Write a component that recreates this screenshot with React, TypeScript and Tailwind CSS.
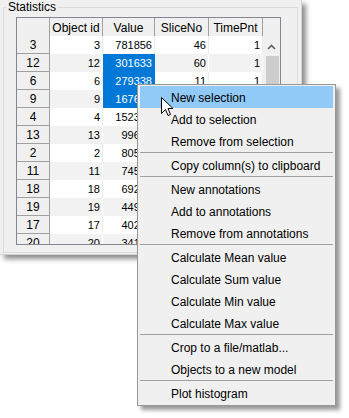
import React from "react";

const columns = ["Object id", "Value", "SliceNo", "TimePnt"];

const rows = [
  ["3", "3", "781856", "46", "1"],
  ["12", "12", "301633", "60", "1"],
  ["6", "6", "279338", "11", "1"],
  ["9", "9", "167642", "52", "1"],
  ["4", "4", "152349", "38", "1"],
  ["13", "13", "99612", "27", "1"],
  ["2", "2", "80527", "64", "1"],
  ["11", "11", "74583", "19", "1"],
  ["18", "18", "69214", "41", "1"],
  ["19", "19", "44936", "33", "1"],
  ["17", "17", "40271", "58", "1"],
  ["20", "20", "34178", "22", "1"],
];

// value cells of rows 12, 6 and 9 are selected
const selected = [1, 2, 3];

type MenuEntry = { label: string; active?: boolean } | "sep";

const menu: MenuEntry[] = [
  { label: "New selection", active: true },
  { label: "Add to selection" },
  { label: "Remove from selection" },
  "sep",
  { label: "Copy column(s) to clipboard" },
  "sep",
  { label: "New annotations" },
  { label: "Add to annotations" },
  { label: "Remove from annotations" },
  "sep",
  { label: "Calculate Mean value" },
  { label: "Calculate Sum value" },
  { label: "Calculate Min value" },
  { label: "Calculate Max value" },
  "sep",
  { label: "Crop to a file/matlab..." },
  { label: "Objects to a new model" },
  "sep",
  { label: "Plot histogram" },
];

function Table() {
  return (
    <div className="ml-[12px] mt-[3px] flex h-[228px] w-[265px] overflow-hidden border border-[#828790] bg-white">
      <div className="grid w-[246px] grid-cols-[33px_53px_52px_54px_54px] content-start auto-rows-[18px]">
        {/* header */}
        <div className="h-[20px] border-r border-b border-[#a0a0a0] bg-[#f0f0f0]" />
        {columns.map((c) => (
          <div
            key={c}
            className="flex h-[20px] items-center justify-center border-r border-b border-[#a0a0a0] bg-[#f0f0f0] text-[12px]"
          >
            {c}
          </div>
        ))}

        {rows.map((r, i) => {
          const gray = i % 2 === 1;
          return (
            <React.Fragment key={i}>
              <div className="flex h-[18px] items-center justify-center border-r border-b border-[#a0a0a0] bg-[#f0f0f0] text-[12px]">
                {r[0]}
              </div>
              {r.slice(1).map((v, j) => {
                const sel = j === 1 && selected.includes(i);
                return (
                  <div
                    key={j}
                    className={
                      "flex h-[18px] items-center justify-end pr-[2px] text-[11px] border-r " +
                      (sel
                        ? "bg-[#0078d7] text-white border-[#0078d7]"
                        : gray
                        ? "bg-[#f2f2f2] border-white"
                        : "bg-white border-[#ececec]")
                    }
                  >
                    {v}
                  </div>
                );
              })}
            </React.Fragment>
          );
        })}
      </div>

      {/* vertical scrollbar */}
      <div className="flex w-[17px] flex-col bg-[#f0f0f0]">
        <div className="h-[20px]" />
        <div className="flex h-[18px] items-center justify-center">
          <svg width="9" height="6" viewBox="0 0 9 6">
            <path d="M1 5 L4.5 1.5 L8 5" fill="none" stroke="#606060" strokeWidth="1.6" />
          </svg>
        </div>
        <div className="flex-1 pl-[3px] pr-[1px]">
          <div className="h-full bg-[#cdcdcd]" />
        </div>
      </div>
    </div>
  );
}

function ContextMenu() {
  return (
    <div className="absolute left-[137px] top-[84px] w-[199px] border border-[#979797] bg-[#f0f0f0] px-[2px] py-[1px] text-[12px] shadow-[4px_4px_4px_rgba(0,0,0,0.4)]">
      {menu.map((m, i) =>
        m === "sep" ? (
          <div key={i} className="h-[2px] border-t border-[#a0a0a0]" />
        ) : (
          <div
            key={i}
            className={
              "flex h-[22px] items-center pl-[31px] pt-[2px] " +
              (m.active ? "bg-[#91c9f7]" : "")
            }
          >
            {m.label}
          </div>
        )
      )}
    </div>
  );
}

function Cursor() {
  return (
    <svg
      className="absolute left-[161px] top-[97px]"
      width="13"
      height="20"
      viewBox="0 0 13 20"
    >
      <path
        d="M0.5 0.5 L0.5 16.5 L4.5 12.5 L7 18.5 L9.5 17.5 L7 11.5 L12 11.5 Z"
        fill="white"
        stroke="black"
        strokeWidth="1"
        strokeLinejoin="miter"
      />
    </svg>
  );
}

export default function App() {
  return (
    <div className="relative h-[418px] w-[349px] overflow-hidden bg-white font-['Liberation_Sans',Arial,sans-serif] text-black">
      {/* window panel */}
      <div className="h-[255px] w-[302px] border-r border-b border-[#d4d4d4] bg-[#f0f0f0] pl-[3px] shadow-[4px_4px_5px_rgba(0,0,0,0.45)]">
        <fieldset className="h-[253px] w-[295px] border border-[#dcdcdc]">
          <legend className="ml-[2px] px-[2px] text-[12px] leading-[14px]">Statistics</legend>
          <Table />
        </fieldset>
      </div>

      <ContextMenu />
      <Cursor />
    </div>
  );
}
